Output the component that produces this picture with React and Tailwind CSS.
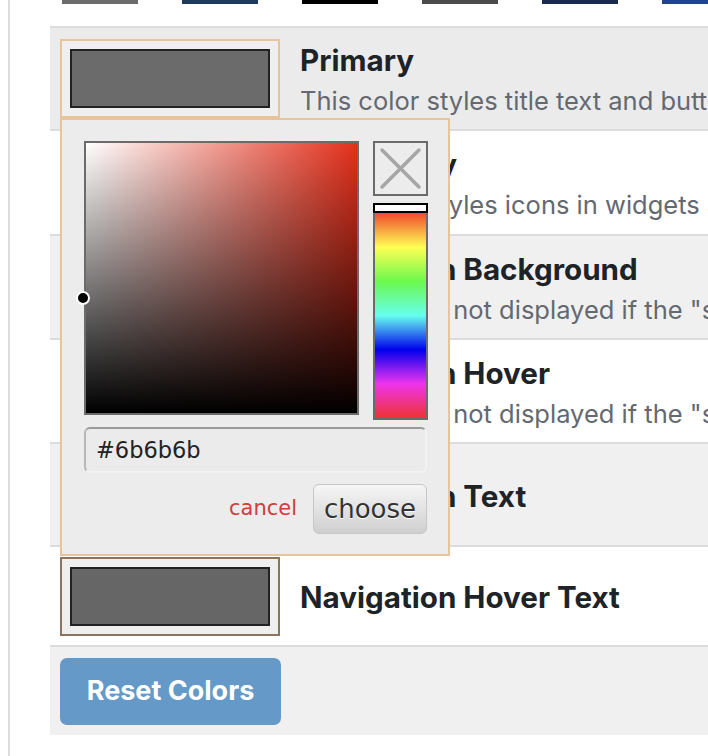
import React from "react";

const TOP = ["#6b6b6b", "#1e3a5c", "#000000", "#4a4a4a", "#1b2b50", "#1f4496"];

const ROWS = [
  { title: "Primary", desc: "This color styles title text and buttons.", bg: "bg-[#ebebec]", h: "h-[103px]", active: true },
  { title: "Secondary", desc: "This color styles icons in widgets and links.", bg: "bg-white", h: "h-[105px]" },
  { title: "Navigation Background", desc: 'This color is not displayed if the "sticky navigation" option is off.', bg: "bg-[#f0f0f1]", h: "h-[104px]" },
  { title: "Navigation Hover", desc: 'This color is not displayed if the "sticky navigation" option is off.', bg: "bg-white", h: "h-[104px]" },
  { title: "Navigation Text", desc: null, bg: "bg-[#f0f0f1]", h: "h-[103px]" },
  { title: "Navigation Hover Text", desc: null, bg: "bg-white", h: "h-[100px]", last: true },
];

function Swatch({ active, last }) {
  const border = active ? "border-[#e8c49b]" : last ? "border-[#8b7560]" : "border-[#c9c9c9]";
  return (
    <div className={`w-[220px] h-[79px] shrink-0 border-2 ${border} bg-[#efefef] p-[8px]`}>
      <div className={`w-full h-full border-2 border-[#222222] ${last ? "bg-[#666666]" : "bg-[#6b6b6b]"}`} />
    </div>
  );
}

function Row({ r }) {
  return (
    <div className={`${r.h} ${r.bg} border-b-2 border-[#dcdcde] flex items-center pl-[10px] gap-[20px] whitespace-nowrap`}>
      <Swatch active={r.active} last={r.last} />
      <div className={`flex flex-col gap-[7px] ${r.desc ? "pt-[1px]" : "pt-[2px]"}`}>
        <div className="text-[29.6px] leading-[36px] font-bold text-[#1d2327]">{r.title}</div>
        {r.desc && <div className="text-[25.5px] leading-[31px] text-[#646970]">{r.desc}</div>}
      </div>
    </div>
  );
}

function Popover() {
  return (
    <div className="absolute left-[60px] top-[118px] w-[390px] h-[438px] border-2 border-[#e8c49b] bg-[#ececec] pl-[22px] pt-[21px] flex flex-col font-['DejaVu_Sans',sans-serif]">
      <div className="flex gap-[14px]">
        <div className="relative w-[275px] h-[274px] border-2 border-[#6b6b6b] bg-[image:linear-gradient(to_top,#000,rgba(0,0,0,0)),linear-gradient(to_right,#fff,#e5301c)]">
          <div className="absolute left-[-10px] top-[148px] w-[14px] h-[14px] rounded-full bg-black border-2 border-white" />
        </div>
        <div className="w-[55px] flex flex-col gap-[7px]">
          <div className="w-[55px] h-[55px] border-2 border-[#6b6b6b]">
            <svg width="51" height="51" viewBox="0 0 51 51">
              <line x1="7" y1="7" x2="44" y2="44" stroke="#a6a6a6" strokeWidth="3.5" strokeLinecap="round" />
              <line x1="44" y1="7" x2="7" y2="44" stroke="#a6a6a6" strokeWidth="3.5" strokeLinecap="round" />
            </svg>
          </div>
          <div className="w-[55px] h-[217px] flex flex-col">
            <div className="h-[10px] border-2 border-black bg-white" />
            <div className="flex-1 border-x-2 border-b-2 border-[#6b6b6b] bg-[image:linear-gradient(to_bottom,#f04a2c,#ffff55_16.7%,#6cf84c_33.3%,#66ffee_50%,#0000ee_66.7%,#ee33ee_83.3%,#ee3333)]" />
          </div>
        </div>
      </div>
      <div className="mt-[7px] w-[343px] h-[46px] rounded-[6px] border-2 border-t-[#9a9a9a] border-l-[#b8b8b8] border-r-[#f2f2f2] border-b-[#f2f2f2] bg-[#ebebeb] pl-[10px] pt-[2px] flex items-center text-[22.5px] text-[#222222]">
        #6b6b6b
      </div>
      <div className="mt-[11px] w-[343px] flex justify-end items-center gap-[16px]">
        <span className="text-[21px] text-[#cc403d]">cancel</span>
        <div className="w-[114px] h-[50px] rounded-[6px] border border-[#c6c6c6] bg-[linear-gradient(to_bottom,#f6f6f6,#cfcfcf)] flex items-center justify-center text-[26px] text-[#333333] [text-shadow:0_1px_0_#fff]">
          choose
        </div>
      </div>
    </div>
  );
}

export default function App() {
  return (
    <div className="relative w-[708px] h-[756px] overflow-hidden bg-white font-['Inter',sans-serif]">
      <div className="ml-[8px] h-full border-l-2 border-[#dddddd] pl-[40px]">
        <div className="flex gap-[44px] ml-[12px] h-[4px]">
          {TOP.map((c, i) => (
            <div key={i} className="w-[76px] h-[4px] shrink-0" style={{ backgroundColor: c }} />
          ))}
        </div>
        <div className="mt-[22px] border-t-2 border-[#dcdcde]">
          {ROWS.map((r, i) => (
            <Row key={i} r={r} />
          ))}
          <div className="h-[88px] bg-[#f0f0f1] flex items-center pl-[10px]">
            <div className="w-[221px] h-[67px] rounded-[7px] bg-[#6499c8] flex items-center justify-center text-white text-[27px] font-bold">
              Reset Colors
            </div>
          </div>
        </div>
      </div>
      <Popover />
    </div>
  );
}
